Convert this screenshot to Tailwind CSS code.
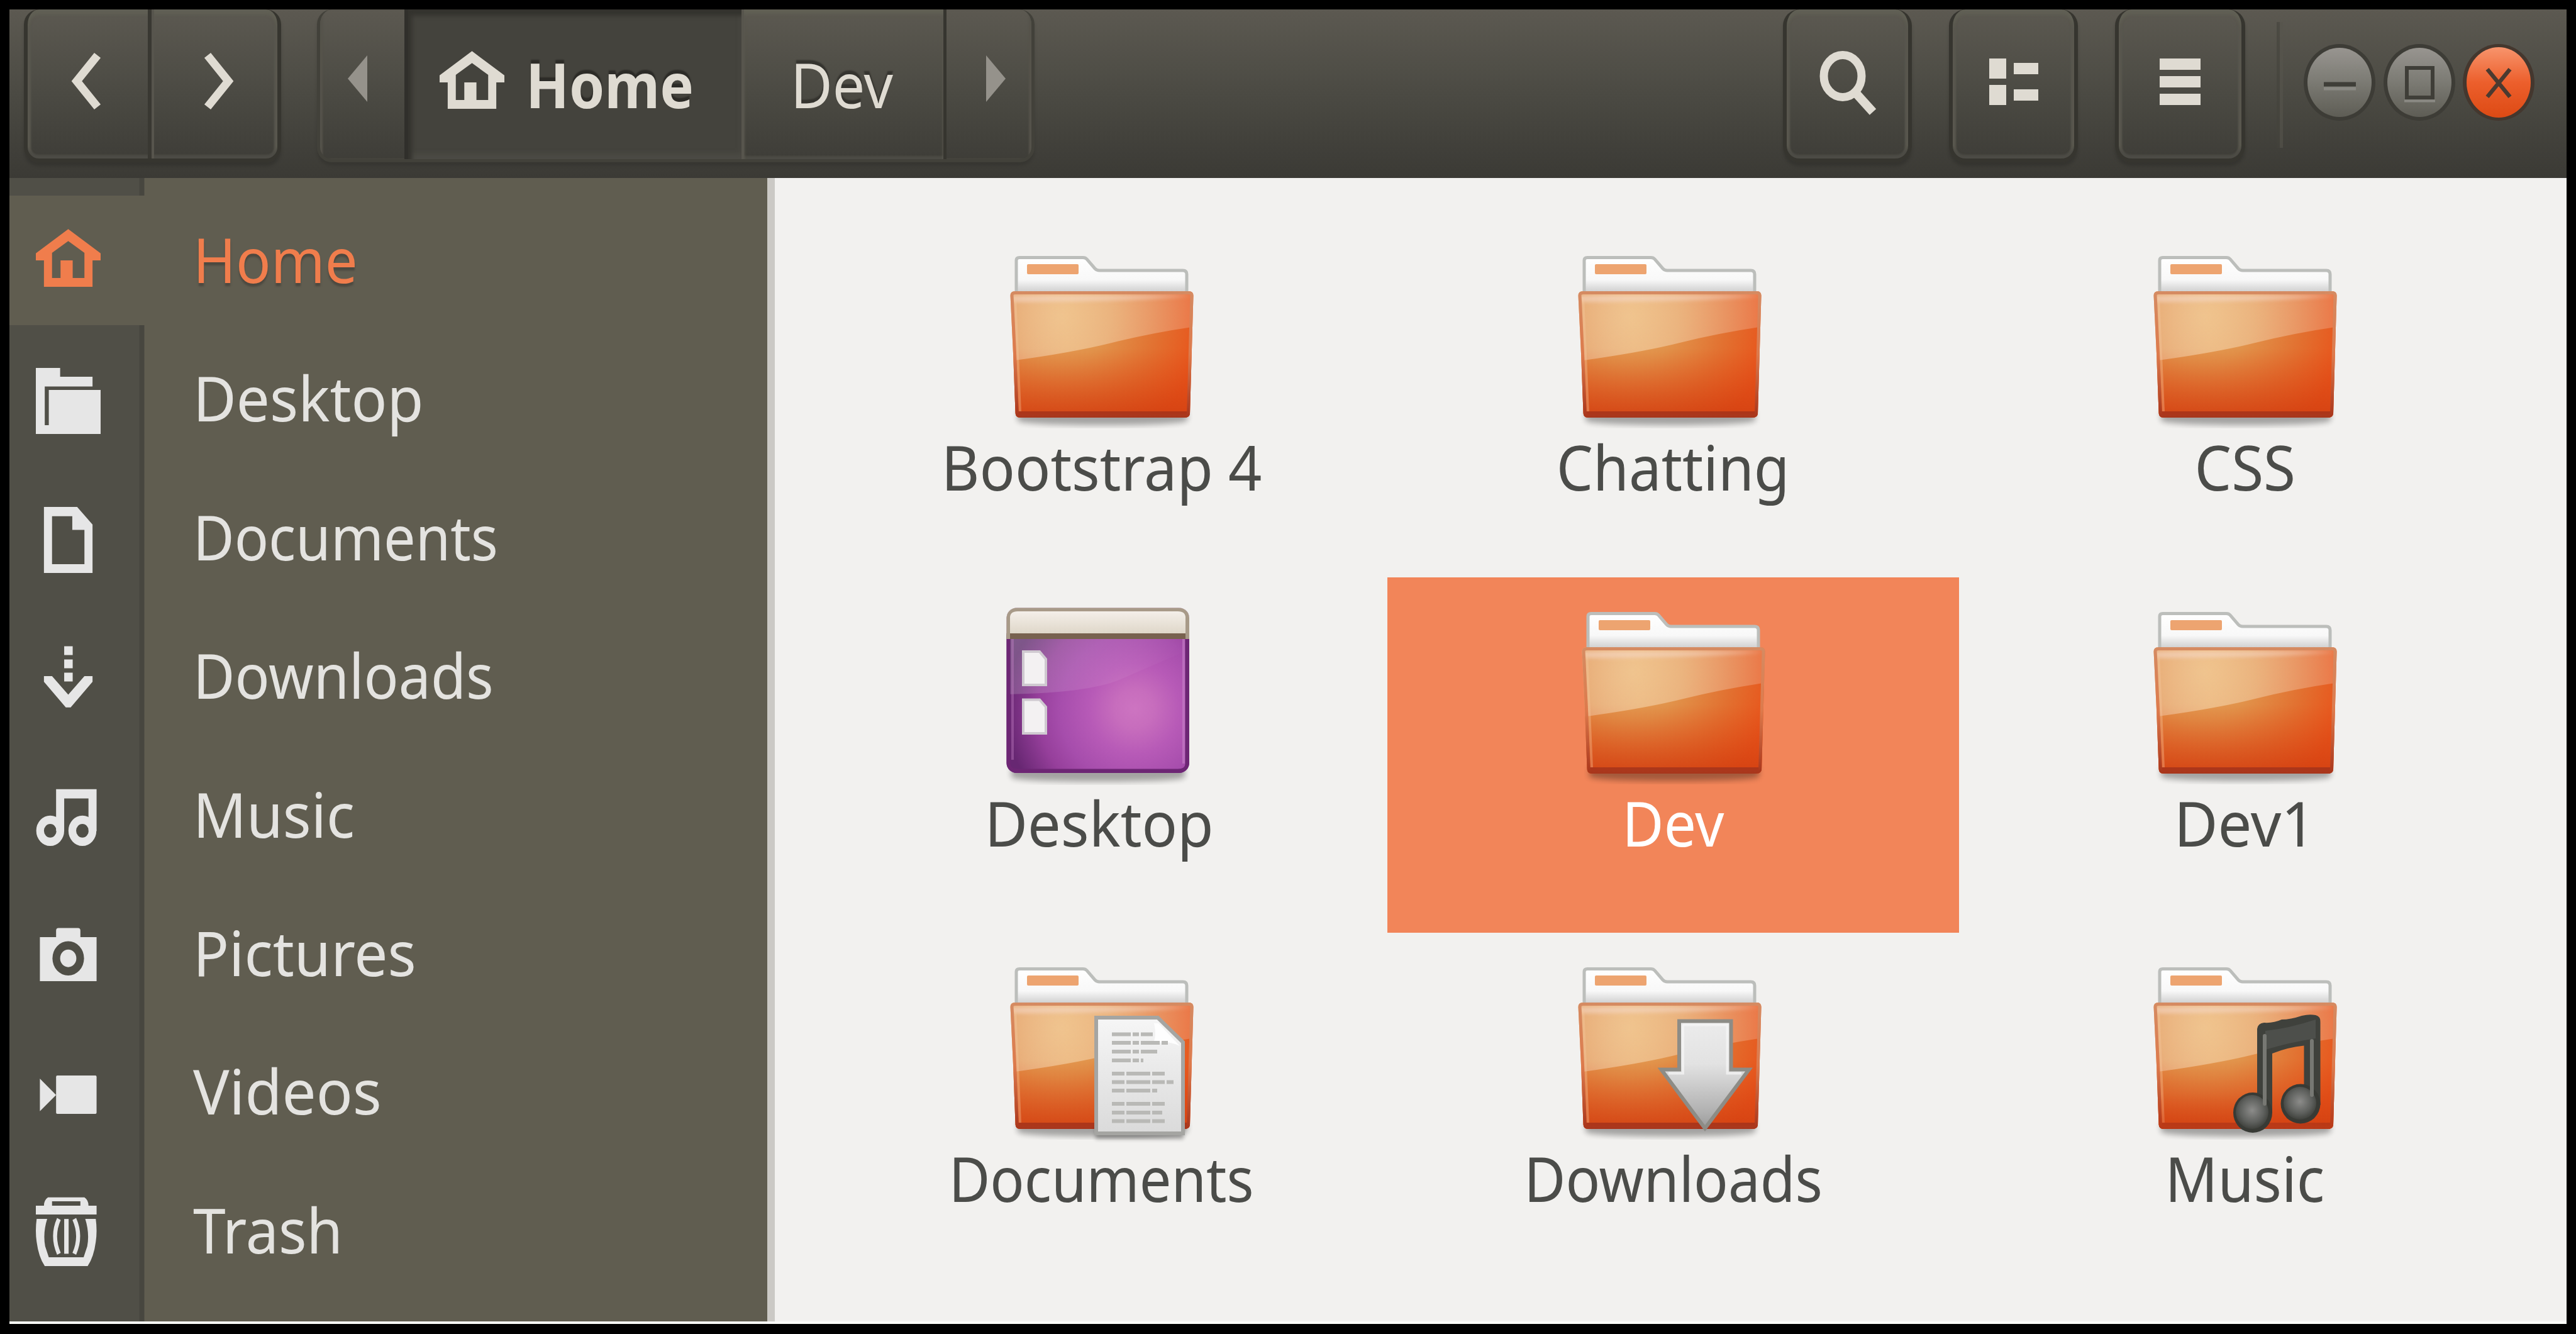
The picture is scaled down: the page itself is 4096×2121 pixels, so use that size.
<!DOCTYPE html>
<html lang="en">
<head>
<meta charset="utf-8">
<title>Home</title>
<script src="https://cdn.jsdelivr.net/npm/@tailwindcss/browser@4"></script>
</head>
<body class="w-[4096px] h-[2121px] overflow-hidden bg-black font-['Noto_Sans',sans-serif] text-[98px] leading-[100px]">

<!-- Shared drawings -->
<svg class="absolute w-0 h-0" aria-hidden="true">
  <defs>
    <radialGradient id="folderBase" gradientUnits="userSpaceOnUse" cx="95" cy="111" r="225">
      <stop offset="0" stop-color="#e6a55c"/><stop offset=".35" stop-color="#e1924a"/>
      <stop offset=".7" stop-color="#e27030"/><stop offset="1" stop-color="#e8541b"/>
    </radialGradient>
    <linearGradient id="folderShade" x1="0" y1="0" x2="0" y2="1">
      <stop offset=".45" stop-color="#dd4814" stop-opacity="0"/><stop offset="1" stop-color="#d03e10" stop-opacity=".85"/>
    </linearGradient>
    <linearGradient id="folderGloss" gradientUnits="userSpaceOnUse" x1="20" y1="0" x2="300" y2="0">
      <stop offset="0" stop-color="#fff" stop-opacity=".26"/><stop offset=".3" stop-color="#fbe8c8" stop-opacity=".46"/><stop offset="1" stop-color="#fff" stop-opacity=".18"/>
    </linearGradient>
    <linearGradient id="folderEdge" x1="0" y1="0" x2="0" y2="1">
      <stop offset="0" stop-color="#d58b62"/><stop offset=".5" stop-color="#dd7a4c"/><stop offset="1" stop-color="#a8351b"/>
    </linearGradient>
    <linearGradient id="tab" x1="0" y1="0" x2="0" y2="1">
      <stop offset="0" stop-color="#fff"/><stop offset=".6" stop-color="#f8f8f8"/><stop offset="1" stop-color="#c8c8c8"/>
    </linearGradient>
    <filter id="soft" x="-20%" y="-20%" width="140%" height="140%"><feGaussianBlur stdDeviation="5"/></filter>
    <filter id="soft2" x="-20%" y="-60%" width="140%" height="220%"><feGaussianBlur stdDeviation="3"/></filter>
    <clipPath id="folderClip"><path d="M22 71H298Q306 71 305.5 79L304 130 300 266Q299 272 291 272H30Q23 272 22.6 265L19 170 14.6 79Q14 71 22 71Z"/></clipPath>
    <g id="folder">
      <path d="M26 262H296V277Q280 284 160 284T26 277Z" fill="#000" opacity=".32" filter="url(#soft)"/>
      <path d="M24 76V22Q24 17.500 29 17.500H130Q134 17.500 136 20L149 35Q152 38 156 38H289Q295 38 295 44V76Z" fill="url(#tab)" stroke="#bcbebb" stroke-width="5"/>
      <rect x="41" y="28" width="82" height="16" rx="2" fill="#eda470"/>
      <g clip-path="url(#folderClip)">
        <rect x="10" y="70" width="300" height="205" fill="url(#folderBase)"/>
        <rect x="10" y="70" width="300" height="205" fill="url(#folderShade)"/>
        <path d="M10 70H310V127Q240 137 176 153T14 182Z" fill="url(#folderGloss)"/>
        <path d="M10 78H306Q240 84 160 86T20 88Z" fill="#f6dcd0" opacity=".55" filter="url(#soft2)"/>
        <path d="M22 80 L30 262" stroke="#f7c8a0" stroke-width="4" opacity=".35" fill="none"/>
        <path d="M24 266H297" stroke="#a8351b" stroke-width="8" opacity=".9"/>
        <path d="M22 71H298Q306 71 305.500 79L304 130 300 266Q299 272 291 272H30Q23 272 22.600 265L19 170 14.600 79Q14 71 22 71Z" fill="none" stroke="url(#folderEdge)" stroke-width="10"/>
      </g>
    </g>

    <radialGradient id="deskBase" gradientUnits="userSpaceOnUse" cx="212" cy="169" r="205">
      <stop offset="0" stop-color="#cd74c1"/><stop offset=".15" stop-color="#c76dbd"/><stop offset=".35" stop-color="#b75ab7"/>
      <stop offset=".58" stop-color="#a64dac"/><stop offset=".75" stop-color="#963f9b"/><stop offset="1" stop-color="#672772"/>
    </radialGradient>
    <linearGradient id="deskBar" x1="0" y1="0" x2="0" y2="1"><stop offset="0" stop-color="#f8f3ef"/><stop offset="1" stop-color="#ddd5c6"/></linearGradient>
    <linearGradient id="deskGloss" x1="0" y1="0" x2="1" y2=".25"><stop offset="0" stop-color="#b8e0c8" stop-opacity=".28"/><stop offset=".55" stop-color="#fff" stop-opacity=".1"/><stop offset="1" stop-color="#fff" stop-opacity="0"/></linearGradient>
    <clipPath id="deskClip"><rect x="8.500" y="8.500" width="290.500" height="262.500" rx="16"/></clipPath>
    <g id="desktop">
      <path d="M16 262H292V278Q280 285 155 285T16 278Z" fill="#000" opacity=".32" filter="url(#soft)"/>
      <g clip-path="url(#deskClip)">
        <rect x="8" y="8" width="292" height="264" fill="url(#deskBase)"/>
        <path d="M8 56H299V75Q240 100 190 122T8 146Z" fill="url(#deskGloss)"/>
        <rect x="8" y="8" width="292" height="44" fill="url(#deskBar)"/>
        <rect x="8" y="49" width="292" height="9" fill="#78624f"/>
        <path d="M11 58V24Q11 11 26 11H281Q296 11 296 24V58" fill="none" stroke="#a89a88" stroke-width="6"/>
        <path d="M11 58V256Q12 268 26 268H281Q296 268 296 256V58" fill="none" stroke="#6d2674" stroke-width="7"/>
        <path d="M18 58V250" stroke="#c580c6" stroke-width="4" opacity=".4"/><path d="M290 58V256" stroke="#c580c6" stroke-width="4" opacity=".6"/>
      </g>
      <path id="deskDoc" d="M35 78H61L71 90V131H35Z" fill="#f3f1f2" stroke="#cfc9d0" stroke-width="4"/>
      <path d="M35 154.500H61L71 166V208H35Z" fill="#f3f1f2" stroke="#cfc9d0" stroke-width="4"/>
    </g>

    <linearGradient id="page" x1="0" y1="0" x2="0" y2="1"><stop offset="0" stop-color="#f6f6f6"/><stop offset="1" stop-color="#dadada"/></linearGradient>
    <linearGradient id="arrow" x1="0" y1="0" x2="0" y2="1"><stop offset="0" stop-color="#ececec"/><stop offset=".4" stop-color="#e2e2e2"/><stop offset=".85" stop-color="#b0b0b0"/><stop offset="1" stop-color="#9a9a9a"/></linearGradient>
    <radialGradient id="head" cx=".5" cy=".45" r=".6"><stop offset="0" stop-color="#8c8c8a"/><stop offset=".6" stop-color="#5e605d"/><stop offset="1" stop-color="#383a35"/></radialGradient>

    <linearGradient id="greyBtn" x1="0" y1="0" x2="0" y2="1"><stop offset="0" stop-color="#989590"/><stop offset=".5" stop-color="#7b7a73"/><stop offset="1" stop-color="#5e5d55"/></linearGradient>
    <linearGradient id="redBtn" x1="0" y1="0" x2="0" y2="1"><stop offset="0" stop-color="#f8946c"/><stop offset=".5" stop-color="#ec5f2c"/><stop offset="1" stop-color="#dd4a14"/></linearGradient>
    <path id="house" fill-rule="evenodd" d="M8 .9 16 6.400V8H14V14H2V8H0V6.400ZM4 6.300V12H6.100V8H9.100V12H12V6.300L8 3.600Z"/>
  </defs>
</svg>

<div class="w-[4096px] h-[2121px] border-[15px] border-b-[16px] border-black flex flex-col overflow-hidden">

  <!-- Header bar -->
  <header class="h-[268px] shrink-0 flex items-start pl-[23px] pr-[46px] bg-linear-to-b from-[#5c5951] via-[#4b4a43] to-[#3b3a35]">
    <div class="flex w-[409px] h-[243px] rounded-[24px] border-[6px] border-t-0 border-[#36352f] overflow-hidden shadow-[0_6px_5px_rgba(0,0,0,0.15),inset_0_8px_4px_#605f54,inset_0_-6px_3px_#4c4b45,inset_5px_0_3px_#5a584f,inset_-5px_0_3px_#5a584f]">
      <div class="flex-1 flex items-center justify-center border-r-[6px] border-[#393832] pb-[10px] pr-[4px]">
        <svg class="w-[60px] h-[92px]" viewBox="0 0 60 92"><path d="M48 5 15 46 48 87" fill="none" stroke="#dfdbd2" stroke-width="13"/></svg>
      </div>
      <div class="flex-1 flex items-center justify-center border-l-[4px] border-[#57554d] pb-[10px] pl-[10px]">
        <svg class="w-[60px] h-[92px]" viewBox="0 0 60 92"><path d="M12 5 45 46 12 87" fill="none" stroke="#dfdbd2" stroke-width="13"/></svg>
      </div>
    </div>

    <div class="ml-[57px] flex w-[1141px] h-[243px] rounded-[24px] border-[5px] border-t-0 border-[#42413a] overflow-hidden text-[#dfdbd2] shadow-[0_5px_5px_rgba(0,0,0,0.12)]">
      <div class="w-[134px] flex items-center justify-center pb-[18px] pr-[14px] shadow-[inset_4px_0_3px_#55534b]">
        <svg class="w-[34px] h-[74px]" viewBox="0 0 34 74"><path d="M1 37 32 0V74Z" fill="#95928b"/></svg>
      </div>
      <div class="w-[536px] flex items-center pl-[50px] border-l-[6px] border-[#302f2b] bg-[#44433d] shadow-[inset_6px_10px_6px_#34332e,inset_0_-8px_8px_#4c4b45] [text-shadow:0_-6px_2px_#2c2b27]">
        <svg class="w-[103px] h-[112px] mb-[7px]" viewBox="0 0 16 16" preserveAspectRatio="none" fill="#dfdbd2"><use href="#house"/></svg>
        <span class="ml-[34px] origin-left scale-x-[.92] font-bold">Home</span>
      </div>
      <div class="w-[326px] flex items-center pl-[74px] border-l-[4px] border-r-[5px] border-l-[#57554d] border-r-[#36352f] shadow-[inset_0_8px_5px_#605f54,inset_0_-5px_3px_#4c4b45] [text-shadow:0_-6px_2px_#35342f]">
        <span class="origin-left scale-x-[.934]">Dev</span>
      </div>
      <div class="flex-1 flex items-center justify-center pb-[18px] pl-[20px] shadow-[inset_-4px_0_3px_#55534b]">
        <svg class="w-[34px] h-[74px]" viewBox="0 0 34 74"><path d="M33 37 2 0V74Z" fill="#95928b"/></svg>
      </div>
    </div>

    <div class="ml-auto flex gap-[59px]">
      <div class="w-[205px] h-[243px] rounded-[26px] border-[6px] border-t-0 border-[#36352f] flex items-center justify-center pb-[3px] shadow-[0_6px_5px_rgba(0,0,0,0.15),inset_0_8px_4px_#605f54,inset_0_-6px_3px_#4c4b45,inset_5px_0_3px_#5a584f,inset_-5px_0_3px_#5a584f]">
        <svg class="w-[92px] h-[104px]" viewBox="0 0 92 104" fill="none" stroke="#dfdbd2"><ellipse cx="38" cy="41" rx="30" ry="33.500" stroke-width="13"/><path d="M58 67 86 98" stroke-width="14"/></svg>
      </div>
      <div class="w-[205px] h-[243px] rounded-[26px] border-[6px] border-t-0 border-[#36352f] flex items-center justify-center pb-[8px] shadow-[0_6px_5px_rgba(0,0,0,0.15),inset_0_8px_4px_#605f54,inset_0_-6px_3px_#4c4b45,inset_5px_0_3px_#5a584f,inset_-5px_0_3px_#5a584f]">
        <svg class="w-[78px] h-[74px]" viewBox="0 0 78 74" fill="#dfdbd2"><path d="M0 0H27V32H0ZM0 42H27V74H0ZM39 7H78V25H39ZM39 49H78V67H39Z"/></svg>
      </div>
      <div class="w-[207px] h-[243px] rounded-[26px] border-[6px] border-t-0 border-[#36352f] flex items-center justify-center pb-[8px] shadow-[0_6px_5px_rgba(0,0,0,0.15),inset_0_8px_4px_#605f54,inset_0_-6px_3px_#4c4b45,inset_5px_0_3px_#5a584f,inset_-5px_0_3px_#5a584f]">
        <svg class="w-[65px] h-[74px]" viewBox="0 0 65 74" fill="#dfdbd2"><path d="M0 0H65V18H0ZM0 28H65V46H0ZM0 56H65V74H0Z"/></svg>
      </div>
    </div>

    <div class="ml-[50px] mt-[20px] w-[10px] h-[200px] border-l-[5px] border-r-[5px] border-l-[#44433c] border-r-[#57554d] opacity-60"></div>

    <div class="ml-[28px] mt-[52px] flex gap-[2.500px]">
      <svg class="w-[124px] h-[128px]" viewBox="-62 -64 124 128"><ellipse rx="57" ry="61" fill="#3d3c36"/><ellipse rx="51" ry="55" fill="url(#greyBtn)"/><path d="M-25 3H26" stroke="#3f3e38" stroke-width="7"/><path d="M-25 10H26" stroke="#8a8983" stroke-width="5"/></svg>
      <svg class="w-[124px] h-[128px]" viewBox="-62 -64 124 128"><ellipse rx="57" ry="61" fill="#3d3c36"/><ellipse rx="51" ry="55" fill="url(#greyBtn)"/><rect x="-20" y="-23" width="41" height="47" fill="none" stroke="#3f3e38" stroke-width="6"/><path d="M-24 29.500H25" stroke="#8a8983" stroke-width="4"/></svg>
      <svg class="w-[124px] h-[128px]" viewBox="-62 -64 124 128"><ellipse rx="57" ry="61" fill="#44372e"/><ellipse rx="51" ry="56" fill="url(#redBtn)"/><path d="M-18-21 18 23M18-21-18 23" stroke="#4b3a30" stroke-width="6.500"/></svg>
    </div>
  </header>

  <div class="flex-1 flex border-b-[4px] border-[#fbfdf9]">
    <!-- Places sidebar -->
    <nav class="w-[1205px] shrink-0 pt-[28px] flex flex-col gap-[14.400px] text-[#e4e3e0] bg-[linear-gradient(to_right,#504f47_0,#504f47_206px,#47463f_207px,#47463f_214px,#605d50_215px)]">
      <div class="h-[206px] bg-[#605d50] flex items-center text-[#f07d4c] [text-shadow:0_5px_3px_#4c4940]">
        <svg class="ml-[42px] w-[103px] h-[112px]" viewBox="0 0 16 16" preserveAspectRatio="none" fill="#f07d4c"><use href="#house"/></svg>
        <span class="ml-[147px] mb-[4px] origin-left scale-x-[.938]">Home</span>
      </div>
      <div class="h-[206px] flex items-center">
        <svg class="ml-[42px] w-[103px] h-[112px]" viewBox="0 0 16 16" preserveAspectRatio="none" fill="#e6e6e6"><path d="M0 1H6V3H14V5.200H2.200V14H3.200V6H16V16H0Z"/></svg>
        <span class="ml-[147px] mb-[4px] origin-left scale-x-[.962]">Desktop</span>
      </div>
      <div class="h-[206px] flex items-center">
        <svg class="ml-[42px] w-[103px] h-[112px]" viewBox="0 0 16 16" preserveAspectRatio="none" fill="#e6e6e6"><path fill-rule="evenodd" d="M2 1H10.200L14 5V16H2ZM4 3.100V14H12V6.200H9V3.100Z"/></svg>
        <span class="ml-[147px] mb-[4px] origin-left scale-x-[.918]">Documents</span>
      </div>
      <div class="h-[206px] flex items-center">
        <svg class="ml-[42px] w-[103px] h-[112px]" viewBox="0 0 16 16" preserveAspectRatio="none" fill="#e6e6e6"><path d="M7 1.200H9.100V3.200H7ZM7 4.200H9.100V6.200H7ZM7 7.200H9.100V9.200H7ZM2 8H4L8 12.200 12 8H14V9.300L8.600 15.100H7.400L2 9.300Z"/></svg>
        <span class="ml-[147px] mb-[4px] origin-left scale-x-[.931]">Downloads</span>
      </div>
      <div class="h-[206px] flex items-center">
        <svg class="ml-[42px] w-[103px] h-[112px]" viewBox="0 0 16 16" preserveAspectRatio="none" fill="#e6e6e6"><path d="M5 2.100H15V11.600H13V4.200H7V11.600H5Z"/><g fill="none" stroke="#e6e6e6" stroke-width="1.900"><circle cx="3.550" cy="11.550" r="2.500"/><circle cx="11.500" cy="11.550" r="2.500"/></g></svg>
        <span class="ml-[147px] mb-[4px] origin-left scale-x-[.956]">Music</span>
      </div>
      <div class="h-[206px] flex items-center">
        <svg class="ml-[42px] w-[103px] h-[112px]" viewBox="0 0 16 16" preserveAspectRatio="none" fill="#e6e6e6"><path fill-rule="evenodd" d="M1 4.300H5V2.800Q5 2.200 5.600 2.200H10.400Q11 2.200 11 2.800V4.300H15V14.300H1ZM8 5.200A3.900 3.900 0 0 0 8 13 3.900 3.900 0 0 0 8 5.200Z"/><circle cx="8" cy="9.100" r="2"/></svg>
        <span class="ml-[147px] mb-[4px] origin-left scale-x-[.963]">Pictures</span>
      </div>
      <div class="h-[206px] flex items-center">
        <svg class="ml-[42px] w-[103px] h-[112px]" viewBox="0 0 16 16" preserveAspectRatio="none" fill="#e6e6e6"><rect x="5" y="4.300" width="10" height="8.700" rx=".3"/><path d="M1 5 5 8.700 1 12.400Z"/></svg>
        <span class="ml-[147px] mb-[4px] origin-left scale-x-[.98]">Videos</span>
      </div>
      <div class="h-[206px] flex items-center">
        <svg class="ml-[42px] w-[103px] h-[112px]" viewBox="0 0 16 16" preserveAspectRatio="none" fill="#e6e6e6"><path fill-rule="evenodd" d="M3 .4H12Q13 1 13 2.300H15V4.300H0V2.300H2Q2 1 3 .4ZM4 1.300V2.300H11V1.300Z"/><path fill-rule="evenodd" d="M.2 5.300H2.800Q1.700 8.500 2.300 11.500L3.200 14H11.800L12.700 11.500Q13.300 8.500 12.200 5.300H14.800Q15.200 8 14.800 10.500 14.300 14 12.800 16H2.200Q.7 14 .2 10.500-.2 8 .2 5.300Z"/><path d="M7 5.300H8.100V13.200H7Z"/><path d="M5.700 5.300Q3.800 9.200 5.700 13.200M9.500 5.300Q11.400 9.200 9.500 13.200" fill="none" stroke="#e6e6e6"/></svg>
        <span class="ml-[147px] mb-[4px] origin-left scale-x-[.95]">Trash</span>
      </div>
    </nav>
    <div class="w-[12px] shrink-0 bg-[#cbc9c5]"></div>

    <!-- Folder grid -->
    <main class="flex-1 bg-[#f2f1ef] pt-[69px] pl-[65px] text-[#4b4c49]">
      <div class="grid grid-cols-[909px_909px_909px] auto-rows-[565.500px]">
        <div class="flex flex-col items-center pt-[40px]">
          <svg class="w-[320px] h-[300px] overflow-visible" viewBox="0 0 320 300"><use href="#folder"/></svg>
          <span class="scale-x-[.952]">Bootstrap 4</span>
        </div>
        <div class="flex flex-col items-center pt-[40px]">
          <svg class="w-[320px] h-[300px] mr-[12px] overflow-visible" viewBox="0 0 320 300"><use href="#folder"/></svg>
          <span class="scale-x-[.94]">Chatting</span>
        </div>
        <div class="flex flex-col items-center pt-[40px]">
          <svg class="w-[320px] h-[300px] overflow-visible" viewBox="0 0 320 300"><use href="#folder"/></svg>
          <span class="scale-x-[.946]">CSS</span>
        </div>

        <div class="flex flex-col items-center pt-[40px]">
          <svg class="w-[320px] h-[300px] overflow-visible" viewBox="0 0 320 300"><use href="#desktop"/></svg>
          <span class="scale-x-[.955] pr-[8px]">Desktop</span>
        </div>
        <div class="flex flex-col items-center pt-[40px] bg-[#f28559] text-white">
          <svg class="w-[320px] h-[300px] overflow-visible" viewBox="0 0 320 300"><use href="#folder"/></svg>
          <span class="scale-x-[.928]">Dev</span>
        </div>
        <div class="flex flex-col items-center pt-[40px]">
          <svg class="w-[320px] h-[300px] overflow-visible" viewBox="0 0 320 300"><use href="#folder"/></svg>
          <span class="scale-x-[.977]">Dev1</span>
        </div>

        <div class="flex flex-col items-center pt-[40px]">
          <svg class="w-[320px] h-[300px] overflow-visible" viewBox="0 0 320 300"><use href="#folder"/>
            <rect x="150" y="270" width="140" height="18" fill="#000" opacity=".3" filter="url(#soft2)"/>
            <path d="M151 95H249L289 134V279H151Z" fill="url(#page)" stroke="#a5a5a2" stroke-width="6"/>
            <path d="M243 104Q248 128 240 137 262 130 284 140L250 104Z" fill="#fff" opacity=".9"/>
            <g fill="none" stroke="#b9b9b6" stroke-width="6"><path stroke-dasharray="30 3 10 3" d="M176 121.500H241M176 135H266M176 149H248M176 163H226"/><path stroke-dasharray="20 3 38 3" d="M176 184H262M176 197.500H274M176 211H248M176 232H262M176 246H256M176 259.500H262"/></g>
          </svg>
          <span class="scale-x-[.918]">Documents</span>
        </div>
        <div class="flex flex-col items-center pt-[40px]">
          <svg class="w-[320px] h-[300px] mr-[12px] overflow-visible" viewBox="0 0 320 300"><use href="#folder"/>
            <path d="M175 100.500H257.500V177.500H286L216 271 146.500 177.500H175Z" fill="url(#arrow)" stroke="#8d8c86" stroke-width="6"/>
            <path d="M181 106.500H251.500V183.500H274" fill="none" stroke="#f6f6f6" stroke-width="4" opacity=".7"/>
            <path d="M181 106.500V183.500H158" fill="none" stroke="#f6f6f6" stroke-width="4" opacity=".7"/>
          </svg>
          <span class="scale-x-[.925]">Downloads</span>
        </div>
        <div class="flex flex-col items-center pt-[40px]">
          <svg class="w-[320px] h-[300px] overflow-visible" viewBox="0 0 320 300"><use href="#folder"/>
            <g clip-path="url(#folderClip)"><rect x="10" y="170" width="300" height="102" fill="url(#folderShade)" opacity=".5"/></g>
            <path d="M179 216V113Q180 104 190 103 205 104 218 98 232 98 250 92 262 89 272 91 280 93 279.500 102V234H253.500V139.500Q228 142 203 152V246H179Z" fill="#3f413c"/>
            <path d="M192 116Q230 112 272 98V128Q232 134 192 146Z" fill="#4d4f4b"/>
            <ellipse cx="172" cy="246" rx="31" ry="32" fill="#383a35"/><ellipse cx="248" cy="232" rx="31.500" ry="31.500" fill="#383a35"/>
            <ellipse cx="171" cy="245" rx="26" ry="27" fill="url(#head)"/><ellipse cx="247" cy="231" rx="26" ry="26" fill="url(#head)"/>
            <path d="M191 124V232M266 132V218" stroke="#777873" stroke-width="6" stroke-linecap="round"/>
          </svg>
          <span class="scale-x-[.945]">Music</span>
        </div>
      </div>
    </main>
  </div>
</div>
</body>
</html>
